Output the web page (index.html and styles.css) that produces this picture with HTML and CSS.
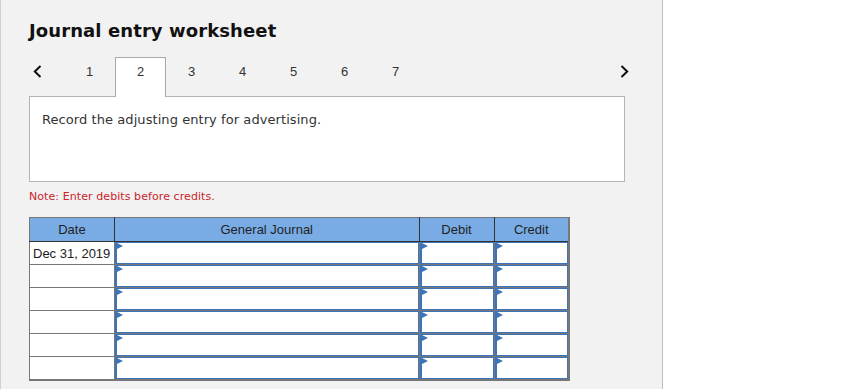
FILE: index.html
```html
<!DOCTYPE html>
<html lang="en">
<head>
    <meta charset="UTF-8">
    <meta name="viewport" content="width=device-width, initial-scale=1.0">
    <title>Journal entry worksheet</title>
    <link rel="stylesheet" href="styles.css">
</head>
<body>
    <div class="panel">
        <h1 class="title">Journal entry worksheet</h1>

        <div class="tabs">
            <button type="button" class="nav prev" aria-label="Previous">
                <svg width="9" height="13" viewBox="0 0 9 13"><polyline points="7.5,1 1.8,6.5 7.5,12" fill="none" stroke="#111" stroke-width="2"/></svg>
            </button>
            <ul class="steps">
                <li>1</li>
                <li class="active">2</li>
                <li>3</li>
                <li>4</li>
                <li>5</li>
                <li>6</li>
                <li>7</li>
            </ul>
            <button type="button" class="nav next" aria-label="Next">
                <svg width="9" height="13" viewBox="0 0 9 13"><polyline points="1.5,1 7.2,6.5 1.5,12" fill="none" stroke="#111" stroke-width="2"/></svg>
            </button>
        </div>

        <div class="prompt">Record the adjusting entry for advertising.</div>

        <p class="note">Note: Enter debits before credits.</p>

        <table class="journal">
            <thead>
                <tr>
                    <th class="col-date">Date</th>
                    <th class="col-account">General Journal</th>
                    <th class="col-amount">Debit</th>
                    <th class="col-amount">Credit</th>
                </tr>
            </thead>
            <tbody id="rows"></tbody>
        </table>
    </div>

    <script>
        const rows = document.getElementById("rows");
        const dates = ["Dec 31, 2019", "", "", "", "", ""];

        dates.forEach((date) => {
            const tr = document.createElement("tr");
            tr.innerHTML = `
                <td class="date">${date}</td>
                <td><div class="entry"><input type="text"></div></td>
                <td><div class="entry"><input type="text"></div></td>
                <td><div class="entry"><input type="text"></div></td>
            `;
            rows.appendChild(tr);
        });
    </script>
</body>
</html>
```

FILE: styles.css
```css
:root {
    --panel-color: #f2f2f2;
    --header-color: #79ace4;
    --entry-color: #3d74b8;
    --grid-color: #777777;
    --note-color: #c9252b;
}

* {
    box-sizing: border-box;
    margin: 0;
    padding: 0;
}

body {
    font-family: "DejaVu Sans", Verdana, sans-serif;
    background-color: white;
    color: #222;
}

.panel {
    width: 663px;
    min-height: 100vh;
    padding: 20px 0 0 28px;
    background-color: var(--panel-color);
    border-left: 1px solid #d0d0d0;
    border-right: 1px solid #bdbdbd;
}

.title {
    font-size: 18px;
    line-height: 22px;
    font-weight: bold;
    letter-spacing: 0.1px;
    color: #111;
}

.tabs {
    display: flex;
    height: 40px;
    margin-top: 15px;
    margin-bottom: -1px;
}

.nav {
    display: flex;
    align-items: center;
    height: 27px;
    margin-top: 1px;
    border: none;
    background: none;
    cursor: pointer;
}

.prev {
    width: 35px;
    padding-left: 4px;
}

.next {
    width: 20px;
    margin-left: auto;
    margin-right: 28px;
    justify-content: center;
}

.steps {
    display: flex;
    list-style: none;
}

.steps li {
    width: 51px;
    height: 40px;
    border: 1px solid transparent;
    border-bottom: none;
    font-family: "Liberation Sans", Arial, sans-serif;
    font-size: 13px;
    line-height: 28px;
    text-align: center;
    color: #333;
    cursor: pointer;
}

.steps li.active {
    position: relative;
    z-index: 1;
    background-color: white;
    border-color: #a9a9a9;
}

.prompt {
    width: 596px;
    height: 86px;
    padding: 15px 12px 0;
    background-color: white;
    border: 1px solid #b4b4b4;
    font-size: 13px;
    line-height: 16px;
    letter-spacing: 0.07px;
    color: #333;
}

.note {
    margin-top: 8px;
    font-size: 11px;
    line-height: 14px;
    letter-spacing: 0.08px;
    color: var(--note-color);
}

.journal {
    width: 541px;
    margin-top: 13px;
    border-collapse: collapse;
    border-right: 2px solid var(--grid-color);
    border-bottom: 2px solid var(--grid-color);
    font-family: "Liberation Sans", Arial, sans-serif;
    font-size: 13px;
}

.journal th {
    height: 24px;
    background-color: var(--header-color);
    border: 1px solid #333;
    border-top-color: var(--grid-color);
    font-weight: normal;
    color: #1f1f1f;
}

.journal th.col-date {
    width: 85px;
    border-left-color: var(--grid-color);
}

.journal th.col-account {
    width: 305px;
}

.journal th.col-amount {
    width: 75px;
}

.journal td {
    height: 22px;
    padding: 0;
    background-color: white;
    border: 1px solid var(--grid-color);
}

.journal td.date {
    padding: 0 3px;
    color: #222;
}

.entry {
    position: relative;
    height: 22px;
    border: 1px solid var(--entry-color);
    border-left-width: 2px;
}

.entry::before {
    content: "";
    position: absolute;
    top: 0;
    left: 0;
    border-left: 6px solid var(--entry-color);
    border-top: 3px solid transparent;
    border-bottom: 3px solid transparent;
}

.entry input {
    display: block;
    width: 100%;
    height: 100%;
    border: none;
    outline: none;
    padding: 0 6px;
    font: inherit;
    background: transparent;
}
```
